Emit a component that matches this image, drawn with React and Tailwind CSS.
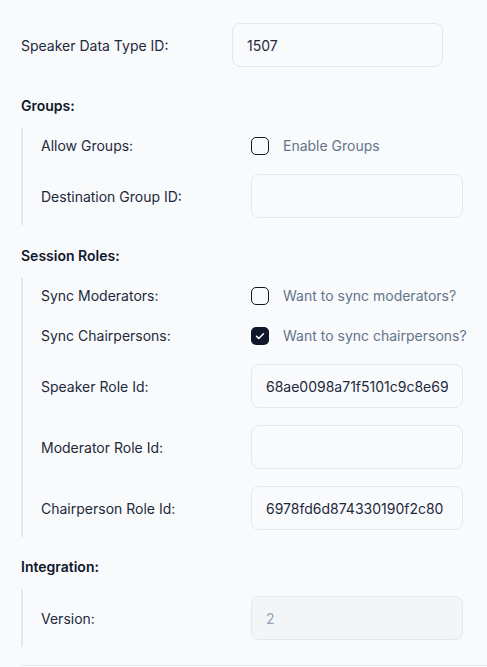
import React from "react";

function TextField({ label, value, disabled, nested }) {
  return (
    <div
      className={
        nested
          ? "grid grid-cols-[210px_212px] items-center"
          : "grid grid-cols-[211px_211px] items-center"
      }
    >
      <label className="text-[14px] text-[#1e293b]">{label}</label>
      <input
        readOnly
        disabled={disabled}
        value={value || ""}
        className={
          "h-[44px] w-full rounded-lg border border-[#e2e8f0] px-[14px] text-[14px] outline-none " +
          (disabled
            ? "bg-[#f4f5f7] text-[#94a3b8]"
            : "bg-[#f9fafc] text-[#1e293b]")
        }
      />
    </div>
  );
}

function CheckField({ label, text, checked }) {
  return (
    <div className="grid h-[23px] grid-cols-[210px_212px] items-center">
      <span className="text-[14px] text-[#1e293b]">{label}</span>
      <div className="flex items-center gap-[14px]">
        {checked ? (
          <span className="flex h-[18px] w-[18px] shrink-0 items-center justify-center rounded-[5px] bg-[#0f172a]">
            <svg width="12" height="12" viewBox="0 0 24 24" fill="none" stroke="white" strokeWidth="3" strokeLinecap="round" strokeLinejoin="round">
              <path d="M5 12.5l4.5 4.5L19 7.5" />
            </svg>
          </span>
        ) : (
          <span className="h-[18px] w-[18px] shrink-0 rounded-[5px] border-[1.5px] border-[#0f172a]" />
        )}
        <span className="whitespace-nowrap text-[14px] text-[#64748b]">{text}</span>
      </div>
    </div>
  );
}

function Section({ title, children, className, top = "pt-[6px]" }) {
  return (
    <div className={className}>
      <h3 className="h-[20px] text-[14px] leading-[20px] font-semibold text-[#0f172a]">{title}</h3>
      <div className={"mt-[12px] flex flex-col gap-[17px] border-l-2 border-[#e2e8f0] pb-[7px] pl-[18px] " + top}>
        {children}
      </div>
    </div>
  );
}

export default function App() {
  return (
    <div
      className="min-h-[667px] overflow-hidden bg-[#f8fafc] pt-[23px] pl-[21px]"
      style={{ fontFamily: "Inter, 'Noto Sans', sans-serif" }}
    >
      <TextField label="Speaker Data Type ID:" value="1507" />

      <Section title="Groups:" className="mt-[29px]">
        <CheckField label="Allow Groups:" text="Enable Groups" />
        <TextField nested label="Destination Group ID:" />
      </Section>

      <Section title="Session Roles:" className="mt-[21px]">
        <CheckField label="Sync Moderators:" text="Want to sync moderators?" />
        <CheckField label="Sync Chairpersons:" text="Want to sync chairpersons?" checked />
        <TextField nested label="Speaker Role Id:" value="68ae0098a71f5101c9c8e69c" />
        <TextField nested label="Moderator Role Id:" />
        <TextField nested label="Chairperson Role Id:" value="6978fd6d874330190f2c80" />
      </Section>

      <Section title="Integration:" className="mt-[20px]" top="pt-[7px]">
        <TextField nested disabled label="Version:" value="2" />
      </Section>

      <div className="mt-[18px] border-t border-[#e2e8f0]" />
    </div>
  );
}
